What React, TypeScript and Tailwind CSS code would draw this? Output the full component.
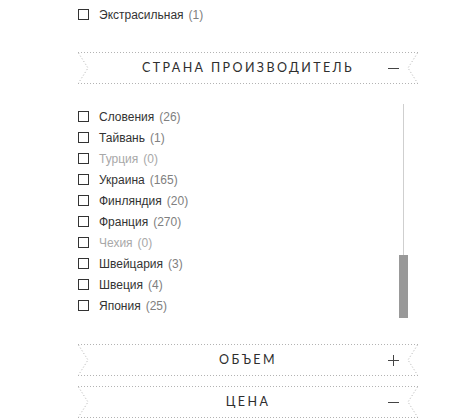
import React from "react";

type Country = { name: string; count: number };

const countries: Country[] = [
  { name: "Словения", count: 26 },
  { name: "Тайвань", count: 1 },
  { name: "Турция", count: 0 },
  { name: "Украина", count: 165 },
  { name: "Финляндия", count: 20 },
  { name: "Франция", count: 270 },
  { name: "Чехия", count: 0 },
  { name: "Швейцария", count: 3 },
  { name: "Швеция", count: 4 },
  { name: "Япония", count: 25 },
];

const DotLine = () => (
  <div className="h-px w-full bg-[linear-gradient(to_right,#b3b3b3_1px,transparent_1px)] bg-[length:3px_1px] bg-repeat-x" />
);

// fishtail end of the ribbon
const Notch = ({ side }: { side: "left" | "right" }) => (
  <svg width="11" height="30" viewBox="0 0 11 30" className="shrink-0">
    <polyline
      points={side === "left" ? "0.5,0 10,15 0.5,30" : "10.5,0 1,15 10.5,30"}
      fill="none"
      stroke="#b3b3b3"
      strokeWidth="1"
      strokeDasharray="1 2.2"
    />
  </svg>
);

const Ribbon = ({ title, open }: { title: string; open: boolean }) => (
  <div className="flex flex-col">
    <DotLine />
    <div className="flex h-[30px] items-center">
      <Notch side="left" />
      <div className="w-[19px]" />
      <span className="flex-1 text-center font-['Lato','Open_Sans',sans-serif] text-[12.5px] uppercase tracking-[2.4px] text-[#2e2e2e]">
        {title}
      </span>
      <svg width="11" height="11" viewBox="0 0 11 11" className="shrink-0">
        <line x1="0" y1="5.5" x2="11" y2="5.5" stroke="#444" strokeWidth="1" />
        {!open && <line x1="5.5" y1="0" x2="5.5" y2="11" stroke="#444" strokeWidth="1" />}
      </svg>
      <div className="w-[8px]" />
      <Notch side="right" />
    </div>
    <DotLine />
  </div>
);

const CheckRow = ({ name, count }: Country) => {
  const disabled = count === 0;
  return (
    <label className="flex h-[21px] items-center">
      <span className="h-[11px] w-[11px] shrink-0 border border-[#333] bg-white" />
      <span className={`ml-[10px] ${disabled ? "text-[#a8a8a8]" : "text-[#333]"}`}>{name}</span>
      <span className={`ml-[5px] ${disabled ? "text-[#a8a8a8]" : "text-[#808080]"}`}>({count})</span>
    </label>
  );
};

export default function App() {
  return (
    <div className="min-h-[419px] w-[467px] bg-white font-['Liberation_Sans',Arial,sans-serif] text-[12px]">
      <div className="ml-[78px] w-[340px] pt-[4px]">
        <CheckRow name="Экстрасильная" count={1} />

        <div className="mt-[27px]">
          <Ribbon title="Страна производитель" open />
        </div>

        {/* Country list with custom scrollbar */}
        <div className="mt-[20px] flex h-[214px] pr-[10px]">
          <div className="flex-1 pt-[2px]">
            {countries.map((c) => (
              <CheckRow key={c.name} {...c} />
            ))}
          </div>
          <div className="flex w-[9px] flex-col items-center">
            <div className="w-px flex-1 bg-[#cfcfcf]" />
            <div className="h-[63px] w-[9px] bg-[#999]" />
          </div>
        </div>

        <div className="mt-[26px]">
          <Ribbon title="Объем" open={false} />
        </div>
        <div className="mt-[10px]">
          <Ribbon title="Цена" open />
        </div>
      </div>
    </div>
  );
}
